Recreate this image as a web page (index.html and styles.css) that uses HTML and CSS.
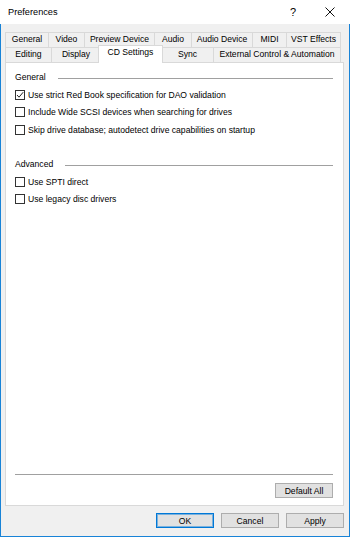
FILE: index.html
```html
<!DOCTYPE html>
<html>
<head>
<meta charset="utf-8">
<link rel="stylesheet" href="styles.css">
</head>
<body>
<div class="titlebar">
  <span class="title">Preferences</span>
  <span class="help">?</span>
  <span class="close"><svg width="10" height="10" viewBox="0 0 10 10"><path d="M0.5 0.5 L9.5 9.5 M9.5 0.5 L0.5 9.5" stroke="#111" stroke-width="1" fill="none"/></svg></span>
</div>
<div class="body">
  <div class="tabs">
    <div class="tabrow">
      <div class="tab t-general">General</div>
      <div class="tab t-video">Video</div>
      <div class="tab t-preview">Preview Device</div>
      <div class="tab t-audio">Audio</div>
      <div class="tab t-audiodev">Audio Device</div>
      <div class="tab t-midi">MIDI</div>
      <div class="tab t-vst">VST Effects</div>
    </div>
    <div class="tabrow">
      <div class="tab t-editing">Editing</div>
      <div class="tab t-display">Display</div>
      <div class="tab t-cd sel">CD Settings</div>
      <div class="tab t-sync">Sync</div>
      <div class="tab t-ext">External Control &amp; Automation</div>
    </div>
  </div>
  <div class="panel">
    <div class="group-head"><span>General</span><span class="rule"></span></div>
    <div class="cb-row"><span class="box"><svg width="8" height="8" viewBox="0 0 8 8"><path d="M1 4 L3 6.2 L7.2 1.2" stroke="#222" stroke-width="1" fill="none"/></svg></span><span>Use strict Red Book specification for DAO validation</span></div>
    <div class="cb-row"><span class="box"></span><span>Include Wide SCSI devices when searching for drives</span></div>
    <div class="cb-row"><span class="box"></span><span>Skip drive database; autodetect drive capabilities on startup</span></div>
    <div class="group-head advanced"><span>Advanced</span><span class="rule"></span></div>
    <div class="cb-row"><span class="box"></span><span>Use SPTI direct</span></div>
    <div class="cb-row"><span class="box"></span><span>Use legacy disc drivers</span></div>
    <div class="spacer"></div>
    <div class="footer-rule"></div>
    <div class="btn default-all">Default All</div>
  </div>
  <div class="buttons">
    <div class="btn default">OK</div>
    <div class="btn">Cancel</div>
    <div class="btn">Apply</div>
  </div>
</div>
</body>
</html>
```

FILE: styles.css
```css
* { box-sizing: border-box; }
html, body { margin: 0; padding: 0; }
body {
  width: 350px;
  height: 537px;
  overflow: hidden;
  background: #fff;
  color: #000;
  font-family: "Liberation Sans", Arial, sans-serif;
  font-size: 8.6px;
}
.titlebar {
  height: 24px;
  background: #fff;
  display: flex;
  align-items: center;
  padding-left: 8px;
  padding-right: 1px;
}
.title { flex: 1; font-size: 9.2px; }
.help {
  width: 36px;
  text-align: center;
  font-size: 11px;
}
.close {
  width: 38px;
  display: flex;
  justify-content: center;
  align-items: center;
}
.body {
  height: 513px;
  background: #f0f0f0;
  border: 1px solid #1883d7;
  border-top: 0;
  padding: 8px 5px 8px 4px;
  display: flex;
  flex-direction: column;
}
.tabs { height: 30px; flex: none; }
.tabrow { display: flex; height: 15px; }
.tab {
  flex: none;
  border: 1px solid #d9d9d9;
  border-right: 0;
  border-bottom: 0;
  text-align: center;
  line-height: 13px;
  white-space: nowrap;
}
.tab:last-child { border-right: 1px solid #d9d9d9; }
.t-general { width: 43px; }
.t-video { width: 36px; }
.t-preview { width: 70px; }
.t-audio { width: 37px; }
.t-audiodev { width: 61px; }
.t-midi { width: 34px; }
.t-vst { width: 55px; }
.t-editing { width: 46px; }
.t-display { width: 49px; }
.t-cd { width: 61px; }
.t-sync { width: 52px; }
.t-ext { width: 128px; }
.tab.sel {
  width: 65px;
  height: 18px;
  margin: -2px -2px 0;
  background: #fff;
  border-right: 1px solid #d9d9d9;
  position: relative;
  z-index: 2;
}
.panel {
  flex: 1;
  background: #fff;
  border: 1px solid #d9d9d9;
  padding: 7px 10px 7px 9px;
  display: flex;
  flex-direction: column;
}
.group-head {
  display: flex;
  align-items: center;
  height: 14px;
  margin-bottom: 2px;
  gap: 12px;
}
.group-head.advanced { margin-top: 18.5px; }
.rule {
  flex: 1;
  height: 1px;
  background: #a0a0a0;
  margin-top: 2px;
}
.cb-row {
  display: flex;
  align-items: center;
  height: 17.5px;
  gap: 3px;
  white-space: nowrap;
}
.box {
  width: 10px;
  height: 10px;
  flex: none;
  border: 1px solid #333;
  background: #fff;
  display: flex;
  align-items: center;
  justify-content: center;
}
.spacer { flex: 1; }
.footer-rule {
  height: 1px;
  background: #a0a0a0;
  margin-bottom: 8px;
}
.btn {
  width: 58px;
  height: 15px;
  background: #e1e1e1;
  border: 1px solid #adadad;
  display: flex;
  align-items: center;
  justify-content: center;
}
.default-all { align-self: flex-end; }
.btn.default {
  border-color: #0078d7;
  box-shadow: inset 0 0 0 1px rgba(0, 120, 215, 0.45);
}
.buttons {
  margin-top: 7px;
  display: flex;
  justify-content: flex-end;
  gap: 7px;
  flex: none;
}
```
